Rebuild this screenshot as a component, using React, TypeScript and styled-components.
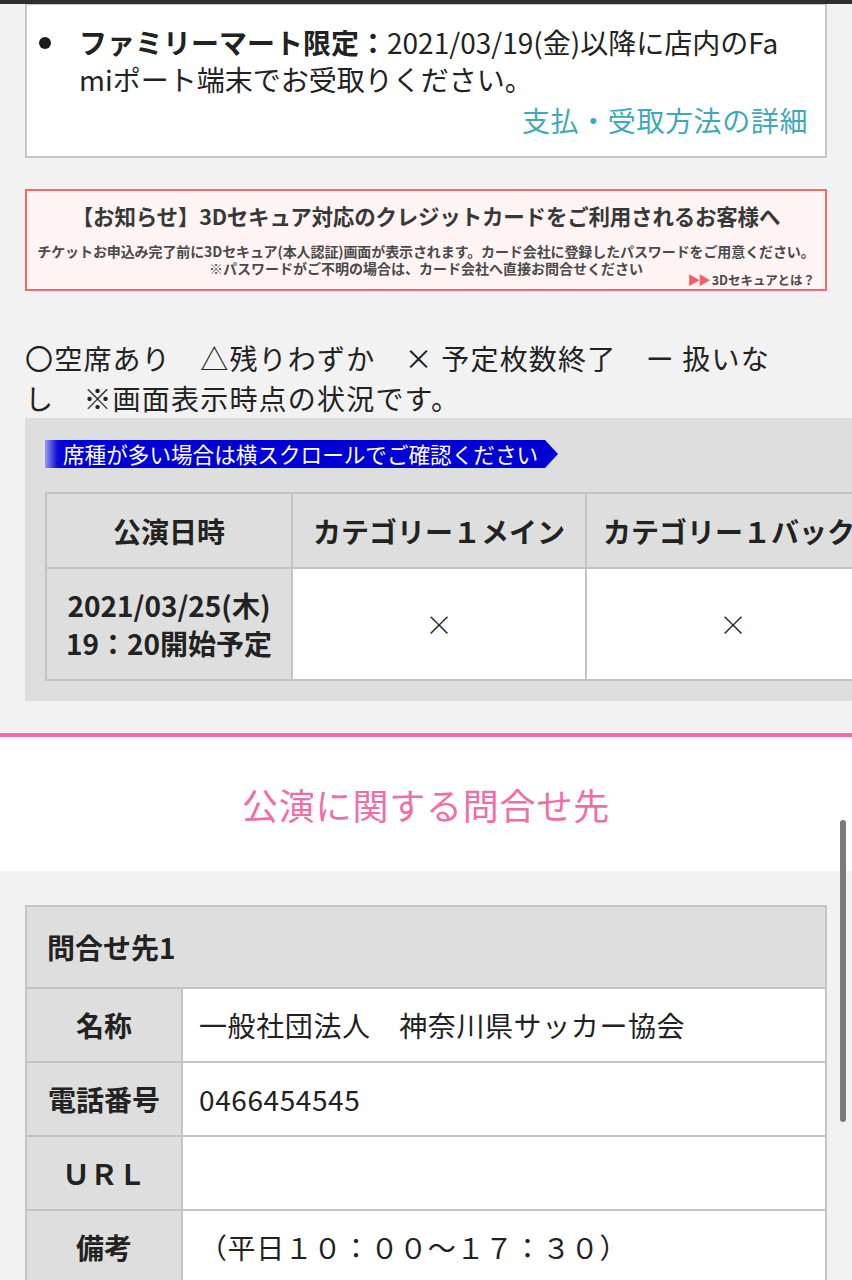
import React from "react"
import styled, { createGlobalStyle } from "styled-components"

const GlobalStyle = createGlobalStyle`
  html, body {
    margin: 0;
    padding: 0;
    background: #f2f2f2;
    overflow-x: hidden;
  }
  ::-webkit-scrollbar {
    width: 0;
    height: 0;
  }
  body {
    font-family: "Noto Sans CJK JP", "Noto Sans", sans-serif;
    color: #222;
  }
`

const Page = styled.div`
  width: 852px;
  position: relative;
`

const TopStrip = styled.div`
  height: 4px;
  background: #2e2e2e;
`

const Inner = styled.div`
  padding: 0 25px;
`

const NoticeCard = styled.div`
  background: #fff;
  border: 2px solid #c6c6c6;
  border-top-width: 1px;
  padding: 19px 17px 17px 11px;
`

const BulletItem = styled.div`
  display: flex;
  align-items: flex-start;
`

const Dot = styled.span`
  flex: 0 0 12px;
  height: 12px;
  border-radius: 50%;
  background: #1d1d1d;
  margin: 13px 28px 0 1px;
`

const BulletText = styled.p`
  margin: 0;
  max-width: 716px;
  font-size: 28px;
  line-height: 37px;
  word-break: break-all;
  b {
    font-weight: 700;
  }
`

const DetailLink = styled.a`
  display: block;
  text-align: right;
  color: #3fa9b6;
  font-size: 28px;
  line-height: 37px;
  letter-spacing: 0.6px;
  margin-top: 4px;
  text-decoration: none;
`

const SecureBanner = styled.div`
  margin-top: 31px;
  height: 102px;
  box-sizing: border-box;
  border: 2px solid #f26b6b;
  background: #fff4f4;
  padding: 10px 6px 0;
  color: #4a4a4a;
  font-weight: 700;
  text-align: center;
`

const BannerTitle = styled.div`
  font-size: 21.5px;
  line-height: 29px;
  font-weight: 700;
  letter-spacing: -0.2px;
  color: #383838;
`

const BannerLine = styled.div`
  font-size: 14px;
  line-height: 17px;
  margin-top: 13px;
  white-space: nowrap;
  letter-spacing: -0.1px;
`

const BannerFoot = styled.div`
  display: grid;
  grid-template-columns: 1fr auto 1fr;
  font-size: 14px;
  line-height: 17px;
`

const BannerNote = styled.span`
  grid-column: 2;
`

const BannerLink = styled.span`
  grid-column: 3;
  justify-self: end;
  margin: 11px 4px 0 0;
  font-size: 12.5px;
  line-height: 17px;
  white-space: nowrap;
  i {
    font-style: normal;
    color: #f35d6a;
    letter-spacing: -2px;
    margin-right: 3px;
  }
`

const Legend = styled.p`
  margin: 47px 0 0;
  font-size: 28px;
  line-height: 40px;
  letter-spacing: 1.2px;
  max-width: 758px;
  word-break: break-all;
`

const SeatArea = styled.div`
  margin-left: 25px;
  background: #dedede;
  padding: 22px 0 20px 20px;
  overflow: hidden;
`

const ScrollHint = styled.div`
  width: 513px;
  height: 28px;
  box-sizing: border-box;
  padding-left: 18px;
  font-size: 21.6px;
  line-height: 28px;
  color: #fff;
  white-space: nowrap;
  background: linear-gradient(to right, #9a9aee 0, #1010d8 12px, #0000d4 20px);
  clip-path: polygon(0 0, 500px 0, 100% 50%, 500px 100%, 0 100%);
`

const SeatTable = styled.table`
  margin-top: 24px;
  border-collapse: collapse;
  table-layout: fixed;
  width: 834px;
  font-size: 28px;
`

const SeatHead = styled.th<{ $left?: boolean }>`
  background: #dedede;
  border: 2px solid #c4c4c4;
  height: 73px;
  padding: 0 16px;
  font-weight: 700;
  white-space: nowrap;
  overflow: hidden;
  text-align: ${(p) => (p.$left ? "left" : "center")};
`

const DateCell = styled.th`
  background: #dedede;
  border: 2px solid #c4c4c4;
  height: 110px;
  padding: 0;
  font-weight: 700;
  line-height: 38px;
`

const MarkCell = styled.td`
  background: #fff;
  border: 2px solid #c4c4c4;
  text-align: center;
  font-weight: 300;
`

const PinkRule = styled.div`
  margin-top: 32px;
  height: 4px;
  background: #ef6ea8;
`

const SectionHead = styled.div`
  background: #fff;
  height: 134px;
  display: flex;
  align-items: center;
  justify-content: center;
`

const SectionTitle = styled.h2`
  margin: 0;
  font-size: 36px;
  font-weight: 400;
  color: #f06ea8;
  letter-spacing: 0.8px;
`

const ContactWrap = styled.div`
  padding: 34px 25px 0;
`

const ContactTable = styled.table`
  width: 802px;
  border-collapse: collapse;
  font-size: 28px;
`

const ContactHead = styled.th`
  background: #dedede;
  border: 2px solid #c4c4c4;
  height: 80px;
  text-align: left;
  padding: 0 20px;
  font-weight: 700;
`

const ContactLabel = styled.th`
  width: 154px;
  background: #dedede;
  border: 2px solid #c4c4c4;
  height: 72px;
  padding: 0;
  font-weight: 700;
`

const ContactValue = styled.td`
  background: #fff;
  border: 2px solid #c4c4c4;
  padding: 0 16px;
  letter-spacing: 0.6px;
`

const ScrollThumb = styled.div`
  position: absolute;
  top: 820px;
  right: 6px;
  width: 6px;
  height: 302px;
  border-radius: 3px;
  background: #7a7a7a;
`

const contacts = [
  { label: "名称", value: "一般社団法人　神奈川県サッカー協会" },
  { label: "電話番号", value: "0466454545" },
  { label: "ＵＲＬ", value: "" },
  { label: "備考", value: "（平日１０：００～１７：３０）" },
]

export default function App() {
  return (
    <Page>
      <GlobalStyle />
      <TopStrip />
      <Inner>
        <NoticeCard>
          <BulletItem>
            <Dot />
            <BulletText>
              <b>ファミリーマート限定：</b>2021/03/19(金)以降に店内のFamiポート端末でお受取りください。
            </BulletText>
          </BulletItem>
          <DetailLink>支払・受取方法の詳細</DetailLink>
        </NoticeCard>

        <SecureBanner>
          <BannerTitle>【お知らせ】3Dセキュア対応のクレジットカードをご利用されるお客様へ</BannerTitle>
          <BannerLine>
            チケットお申込み完了前に3Dセキュア(本人認証)画面が表示されます。カード会社に登録したパスワードをご用意ください。
          </BannerLine>
          <BannerFoot>
            <BannerNote>※パスワードがご不明の場合は、カード会社へ直接お問合せください</BannerNote>
            <BannerLink>
              <i>▶▶</i>3Dセキュアとは？
            </BannerLink>
          </BannerFoot>
        </SecureBanner>

        <Legend>〇空席あり　△残りわずか　× 予定枚数終了　ー 扱いなし　※画面表示時点の状況です。</Legend>
      </Inner>

      <SeatArea>
        <ScrollHint>席種が多い場合は横スクロールでご確認ください</ScrollHint>
        <SeatTable>
          <colgroup>
            <col style={{ width: 246 }} />
            <col style={{ width: 294 }} />
            <col style={{ width: 294 }} />
          </colgroup>
          <thead>
            <tr>
              <SeatHead>公演日時</SeatHead>
              <SeatHead>カテゴリー１メイン</SeatHead>
              <SeatHead $left>カテゴリー１バックスタンド</SeatHead>
            </tr>
          </thead>
          <tbody>
            <tr>
              <DateCell>
                2021/03/25(木)
                <br />
                19：20開始予定
              </DateCell>
              <MarkCell>×</MarkCell>
              <MarkCell>×</MarkCell>
            </tr>
          </tbody>
        </SeatTable>
      </SeatArea>

      <PinkRule />
      <SectionHead>
        <SectionTitle>公演に関する問合せ先</SectionTitle>
      </SectionHead>

      <ContactWrap>
        <ContactTable>
          <thead>
            <tr>
              <ContactHead colSpan={2}>問合せ先1</ContactHead>
            </tr>
          </thead>
          <tbody>
            {contacts.map((c) => (
              <tr key={c.label}>
                <ContactLabel>{c.label}</ContactLabel>
                <ContactValue>{c.value}</ContactValue>
              </tr>
            ))}
          </tbody>
        </ContactTable>
      </ContactWrap>

      <ScrollThumb />
    </Page>
  )
}
